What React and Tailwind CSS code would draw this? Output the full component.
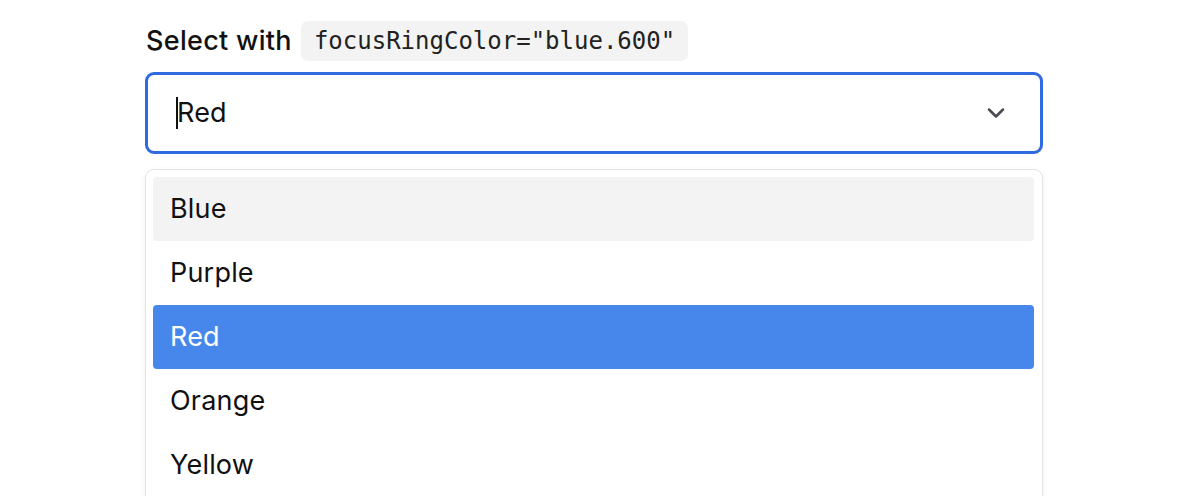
import { ChevronDown } from "lucide-react";

export default function App() {
  const options = ["Blue", "Purple", "Red", "Orange", "Yellow"];
  const selected = "Red";
  const hovered = "Blue";

  return (
    <div className="h-[496px] overflow-hidden bg-white font-['Inter',sans-serif] text-[#111]">
      <div className="w-[898px] ml-[145px] pt-[21px]">
        {/* Label */}
        <div className="flex items-center gap-[9px] h-[40px]">
          <span className="text-[27px] font-medium tracking-[0.3px] pl-[1px]">Select with</span>
          <code className="h-[40px] px-[13px] flex items-center rounded-[7px] bg-[#f3f3f3] font-['DejaVu_Sans_Mono',monospace] text-[24px] text-[#222]">
            focusRingColor="blue.600"
          </code>
        </div>

        {/* Trigger */}
        <div className="mt-[11px] h-[82px] rounded-[9px] border-[3px] border-[#2f6ae0] flex items-center pl-[28px] pr-[30px]">
          <span className="w-[2px] h-[32px] bg-[#111] mr-[-1px]"></span>
          <span className="flex-1 text-[27px] tracking-[0.2px]">{selected}</span>
          <ChevronDown className="w-[28px] h-[28px] text-[#4b4b53]" strokeWidth={2.2} />
        </div>

        {/* Menu */}
        <div className="mt-[15px] h-[400px] rounded-[9px] border border-[#e3e3e3] shadow-[0_2px_6px_rgba(0,0,0,0.06)] pt-[7px] pl-[7px] pr-[8px]">
          {options.map((opt) => (
            <div
              key={opt}
              className={
                "h-[64px] flex items-center pl-[17px] rounded-[4px] text-[27px] tracking-[0.2px] " +
                (opt === selected
                  ? "bg-[#4787ec] text-white"
                  : opt === hovered
                  ? "bg-[#f3f3f3]"
                  : "")
              }
            >
              {opt}
            </div>
          ))}
        </div>
      </div>
    </div>
  );
}
